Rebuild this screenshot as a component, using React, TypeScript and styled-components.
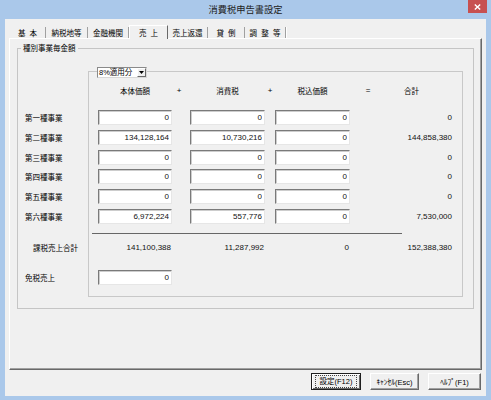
import React from "react";
import styled, { createGlobalStyle } from "styled-components";

const CJK = `"Noto Sans CJK JP", "Liberation Sans", sans-serif`;
const NUM = `"Liberation Sans", "Noto Sans CJK JP", sans-serif`;

const GlobalStyle = createGlobalStyle`
  html, body { margin: 0; padding: 0; background: #ffffff; }
  body { font-family: ${NUM}; }
  * { box-sizing: border-box; }
`;

const Window = styled.div`
  width: 491px;
  height: 400px;
  background: #aac8ea;
  display: flex;
  flex-direction: column;
  overflow: hidden;
`;

const TitleBar = styled.div`
  height: 19px;
  flex: none;
  display: grid;
  grid-template-columns: 1fr auto 1fr;
  align-items: start;
`;

const Title = styled.div`
  grid-column: 2;
  font-family: ${CJK};
  font-size: 9.25px;
  line-height: 19px;
  color: #222222;
  white-space: nowrap;
`;

const CloseButton = styled.div`
  grid-column: 3;
  justify-self: end;
  margin-right: 4px;
  width: 19px;
  height: 13px;
  background: #c75050;
  display: flex;
  align-items: center;
  justify-content: center;
`;

const Client = styled.div`
  flex: 1;
  margin: 0 5px 4px;
  background: #f0f0f0;
  display: flex;
  flex-direction: column;
  padding: 6px 4px 0;
`;

const TabStrip = styled.div`
  display: flex;
  align-items: flex-end;
  height: 14px;
  margin: 0 0 -1px 1px;
  position: relative;
  z-index: 1;
`;

const Tab = styled.div<{ $w: number; $active?: boolean }>`
  width: ${(p) => p.$w}px;
  height: ${(p) => (p.$active ? 14 : 11)}px;
  margin-bottom: ${(p) => (p.$active ? 0 : 1)}px;
  font-family: ${CJK};
  font-size: 7.5px;
  line-height: 11px;
  word-spacing: 2.5px;
  text-align: center;
  color: #000;
  white-space: pre;
  background: #f0f0f0;
  border-right: 1px solid ${(p) => (p.$active ? "#696969" : "#a0a0a0")};
  box-shadow: ${(p) => (p.$active ? "none" : "1px 0 0 #ffffff")};
  ${(p) =>
    p.$active
      ? `border-top: 1px solid #ffffff; border-left: 1px solid #ffffff; padding-top: 1px;`
      : ``}
`;

const Panel = styled.div`
  flex: 1;
  display: flex;
  flex-direction: column;
  border: 1px solid;
  border-color: #ffffff #696969 #696969 #ffffff;
  box-shadow: inset -1px -1px 0 #a0a0a0;
  padding: 4px 7px 0 7px;
`;

const Group = styled.fieldset`
  margin: 0;
  padding: 14px 10px 11px 7px;
  border: 1px solid #c5c5c5;
  min-width: 0;
`;

const GroupLegend = styled.legend`
  font-family: ${CJK};
  font-size: 7.5px;
  line-height: 10px;
  padding: 0 2px;
  margin-left: -4px;
  color: #000;
`;

const Sheet = styled.div`
  display: grid;
  grid-template-columns: 63px 10px 74px 18px 75px 10px 75px 36px 67px 10px;
  grid-template-rows: 4px 13px 26px repeat(6, 19.8px) 9.2px 32px 27px;
  font-family: ${NUM};
  color: #111;
`;

const Frame = styled.div`
  grid-column: 2 / -1;
  grid-row: 2 / -1;
  border: 1px solid #c8c8c8;
`;

const Combo = styled.div`
  grid-column: 3;
  grid-row: 1 / 3;
  align-self: start;
  justify-self: start;
  margin-left: -1px;
  width: 50px;
  height: 11px;
  display: flex;
  background: #ffffff;
  border: 1px solid;
  border-color: #8a8a8a #d8d8d8 #d8d8d8 #8a8a8a;
`;

const ComboText = styled.div`
  flex: 1;
  font-family: ${NUM};
  font-size: 7.5px;
  line-height: 9px;
  padding-left: 1px;
  white-space: nowrap;
  color: #000;
`;

const ComboArrow = styled.div`
  width: 9px;
  height: 9px;
  background: #f0f0f0;
  border: 1px solid;
  border-color: #ffffff #696969 #696969 #ffffff;
  display: flex;
  align-items: center;
  justify-content: center;
`;

const Header = styled.div<{ $col: number; $padRight?: number }>`
  grid-column: ${(p) => p.$col};
  grid-row: 3;
  align-self: start;
  margin-top: 1px;
  font-family: ${CJK};
  font-size: 7.5px;
  line-height: 12px;
  text-align: center;
  padding-right: ${(p) => p.$padRight ?? 0}px;
  white-space: nowrap;
  color: #000;
`;

const Operator = styled.div<{ $col: number; $shift?: number }>`
  grid-column: ${(p) => p.$col};
  grid-row: 3;
  align-self: start;
  margin-top: 1px;
  font-family: ${NUM};
  font-size: 8px;
  line-height: 12px;
  text-align: center;
  padding-right: ${(p) => p.$shift ?? 0}px;
  color: #000;
`;

const RowLabel = styled.div<{ $row: number; $indent?: number; $lh?: number }>`
  grid-column: 1;
  grid-row: ${(p) => p.$row};
  align-self: start;
  padding-left: ${(p) => p.$indent ?? 0}px;
  font-family: ${CJK};
  font-size: 7.5px;
  line-height: ${(p) => p.$lh ?? 15}px;
  white-space: nowrap;
  color: #000;
`;

const NumField = styled.input<{ $row: number; $col: number }>`
  grid-column: ${(p) => p.$col};
  grid-row: ${(p) => p.$row};
  align-self: start;
  width: 100%;
  height: 15px;
  margin: 0;
  background: #ffffff;
  border: 1px solid;
  border-color: #7a7a7a #e6e6e6 #e6e6e6 #7a7a7a;
  box-shadow: inset 1px 1px 0 #cdcdcd;
  font-family: ${NUM};
  font-size: 8px;
  text-align: right;
  padding: 0 2px 0 0;
  color: #111;
  outline: none;
`;

const Value = styled.div<{ $row: number; $col: number; $lh?: number }>`
  grid-column: ${(p) => p.$col};
  grid-row: ${(p) => p.$row};
  align-self: start;
  font-family: ${NUM};
  font-size: 8px;
  line-height: ${(p) => p.$lh ?? 15}px;
  text-align: right;
  padding-right: 1px;
  white-space: nowrap;
  color: #111;
`;

const TotalRule = styled.div`
  grid-column: 2 / 10;
  grid-row: 10;
  align-self: center;
  height: 1px;
  margin: 0 51px 0 4px;
  background: #666666;
`;

const ButtonRow = styled.div`
  display: flex;
  justify-content: flex-end;
  gap: 9px;
  height: 17px;
  margin: 3px 1px 6px 0;
`;

const Button = styled.button<{ $w: number; $default?: boolean }>`
  width: ${(p) => p.$w}px;
  height: 17px;
  padding: 0;
  margin: 0;
  background: #f0f0f0;
  border: 1px solid;
  border-color: ${(p) =>
    p.$default ? "#1e1e1e" : "#ffffff #696969 #696969 #ffffff"};
  box-shadow: ${(p) =>
    p.$default
      ? "inset 1px 1px 0 #ffffff, inset -1px -1px 0 #696969"
      : "inset -1px -1px 0 #a0a0a0"};
  font-family: ${NUM};
  font-size: 7.5px;
  color: #000;
  display: flex;
  align-items: center;
  justify-content: center;
  white-space: nowrap;
`;

const FocusText = styled.span`
  outline: 1px dotted #444;
  outline-offset: 1px;
  padding: 0 3px;
  line-height: 9px;
`;

const tabs = [
  { label: "基 本", w: 36 },
  { label: "納税地等", w: 42 },
  { label: "金融機関", w: 41 },
  { label: "売 上", w: 39, active: true },
  { label: "売上返還", w: 40 },
  { label: "貸 倒", w: 37 },
  { label: "調 整 等", w: 41 },
];

const rows = [
  { label: "第一種事業", a: "0", b: "0", c: "0", t: "0" },
  { label: "第二種事業", a: "134,128,164", b: "10,730,216", c: "0", t: "144,858,380" },
  { label: "第三種事業", a: "0", b: "0", c: "0", t: "0" },
  { label: "第四種事業", a: "0", b: "0", c: "0", t: "0" },
  { label: "第五種事業", a: "0", b: "0", c: "0", t: "0" },
  { label: "第六種事業", a: "6,972,224", b: "557,776", c: "0", t: "7,530,000" },
];

export default function App() {
  return (
    <>
      <GlobalStyle />
      <Window>
        <TitleBar>
          <Title>消費税申告書設定</Title>
          <CloseButton>
            <svg width="7" height="6" viewBox="0 0 7 6">
              <path d="M0.8 0.5 L6.2 5.5 M6.2 0.5 L0.8 5.5" stroke="#ffffff" strokeWidth="1.4" />
            </svg>
          </CloseButton>
        </TitleBar>
        <Client>
          <TabStrip>
            {tabs.map((t) => (
              <Tab key={t.label} $w={t.w} $active={t.active}>
                {t.label}
              </Tab>
            ))}
          </TabStrip>
          <Panel>
            <Group>
              <GroupLegend>種別事業毎金額</GroupLegend>
              <Sheet>
                <Frame />
                <Combo>
                  <ComboText>8%適用分</ComboText>
                  <ComboArrow>
                    <svg width="5" height="3" viewBox="0 0 5 3">
                      <polygon points="0,0 5,0 2.5,3" fill="#000" />
                    </svg>
                  </ComboArrow>
                </Combo>
                <Header $col={3}>本体価額</Header>
                <Operator $col={4} $shift={4}>+</Operator>
                <Header $col={5}>消費税</Header>
                <Operator $col={6}>+</Operator>
                <Header $col={7}>税込価額</Header>
                <Operator $col={8}>=</Operator>
                <Header $col={9} $padRight={16}>合計</Header>
                {rows.map((r, i) => (
                  <React.Fragment key={r.label}>
                    <RowLabel $row={4 + i}>{r.label}</RowLabel>
                    <NumField $row={4 + i} $col={3} readOnly value={r.a} />
                    <NumField $row={4 + i} $col={5} readOnly value={r.b} />
                    <NumField $row={4 + i} $col={7} readOnly value={r.c} />
                    <Value $row={4 + i} $col={9}>{r.t}</Value>
                  </React.Fragment>
                ))}
                <TotalRule />
                <RowLabel $row={11} $indent={8} $lh={20}>課税売上合計</RowLabel>
                <Value $row={11} $col={3} $lh={20}>141,100,388</Value>
                <Value $row={11} $col={5} $lh={20}>11,287,992</Value>
                <Value $row={11} $col={7} $lh={20}>0</Value>
                <Value $row={11} $col={9} $lh={20}>152,388,380</Value>
                <RowLabel $row={12}>免税売上</RowLabel>
                <NumField $row={12} $col={3} readOnly value="0" />
              </Sheet>
            </Group>
          </Panel>
          <ButtonRow>
            <Button $w={50} $default>
              <FocusText>設定(F12)</FocusText>
            </Button>
            <Button $w={49}>ｷｬﾝｾﾙ(Esc)</Button>
            <Button $w={53}>ﾍﾙﾌﾟ(F1)</Button>
          </ButtonRow>
        </Client>
      </Window>
    </>
  );
}
